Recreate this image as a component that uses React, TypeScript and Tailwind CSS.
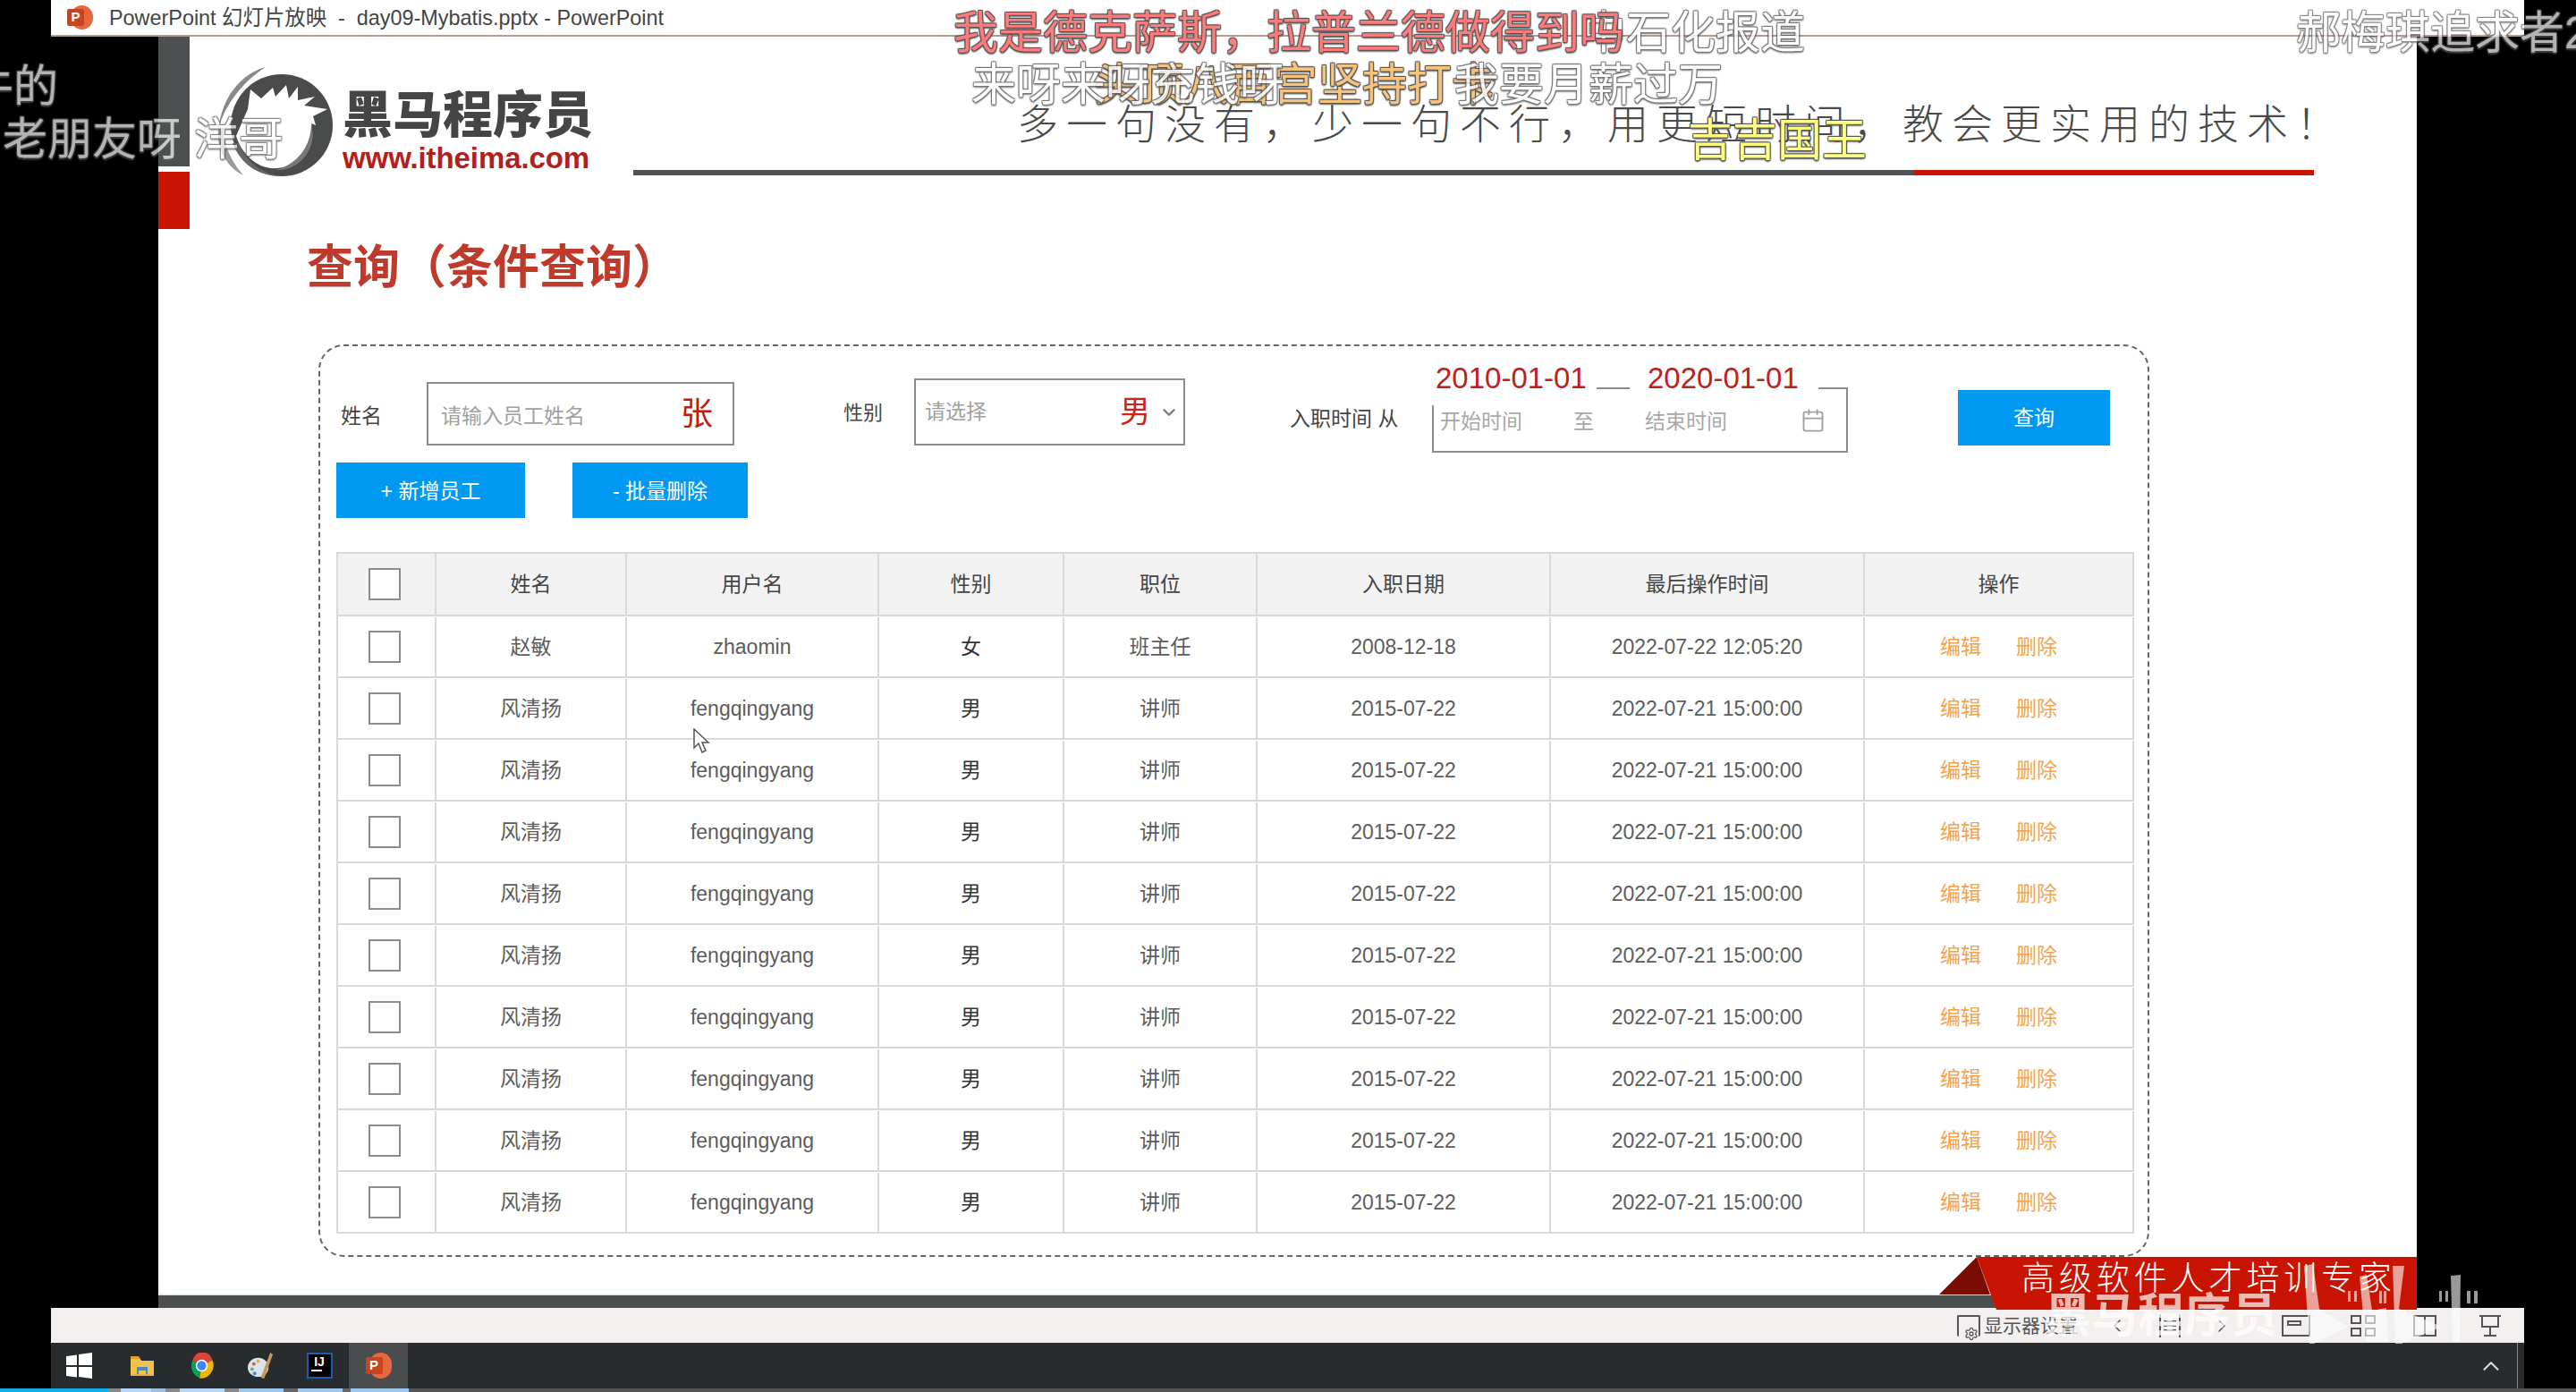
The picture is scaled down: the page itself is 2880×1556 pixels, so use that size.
import { Calendar, ChevronDown, ChevronLeft, ChevronRight, ChevronUp, Settings } from "lucide-react";

const COLS = "grid grid-cols-[110px_213px_282px_207px_216px_328px_351px_301px]";
const CELL = "flex items-center justify-center border-r-2 border-[#d9d9d9]";
const SHADOW =
  "[text-shadow:1px_1px_1px_#555,-1px_-1px_1px_#555,1px_-1px_1px_#555,-1px_1px_1px_#555,0_2px_2px_#666]";
const BARRAGE = `absolute whitespace-pre text-[50px] leading-none ${SHADOW}`;

const rows = [
  ["赵敏", "zhaomin", "女", "班主任", "2008-12-18", "2022-07-22 12:05:20"],
  ...Array.from({ length: 9 }, () => ["风清扬", "fengqingyang", "男", "讲师", "2015-07-22", "2022-07-21 15:00:00"]),
];

function Checkbox() {
  return <div className="mr-[5px] h-[36px] w-[36px] border-2 border-[#8c8c8c] bg-white" />;
}

function Logo() {
  return (
    <svg viewBox="0 0 170 150" className="h-[150px] w-[170px] shrink-0">
      <path d="M77 15C50 22 28 48 24 85C30 60 50 32 77 15Z" fill="#8a8a8a" />
      <path d="M24 85C22 110 36 128 52 136C40 122 30 105 30 82Z" fill="#9a9a9a" />
      <circle cx="95" cy="80" r="57" fill="#4a4c4c" />
      <path
        d="M44 92L57 62L60 40L72 50L85 38L88 48L100 35L103 50L113 37L113 52L132 48L120 58L146 62L130 70L133 80L128 78C132 100 118 126 90 128C68 130 50 112 44 92Z"
        fill="#fff"
      />
      <path d="M128 78C136 105 115 132 88 130C112 124 128 104 128 78Z" fill="#777" />
      <path d="M40 100C50 125 70 137 95 137C75 135 55 122 47 100Z" fill="#666" />
    </svg>
  );
}

function FolderIcon() {
  return (
    <svg viewBox="0 0 26 22" className="h-[22px] w-[26px]">
      <path d="M0 2h10l2 3h14v17H0Z" fill="#f2c14e" />
      <path d="M0 0h9l2 3H0Z" fill="#e0a030" />
      <path d="M7 12h12v8h-2v-4H9v4H7Z" fill="#3d8fc9" />
      <path d="M0 20h26v2H0Z" fill="#e8b33e" />
    </svg>
  );
}

function ChromeIcon() {
  return (
    <svg viewBox="0 0 48 48" className="h-[29px] w-[29px]">
      <path d="M24 24 7 14A20 24 0 0 1 44 14Z" fill="#db4437" />
      <path d="M24 24 7 14A22 24 0 0 0 20 47Z" fill="#0f9d58" />
      <path d="M24 24 44 14A22 24 0 0 1 20 47Z" fill="#f4b400" />
      <circle cx="24" cy="24" r="11" fill="#fff" />
      <circle cx="24" cy="24" r="8.5" fill="#4285f4" />
    </svg>
  );
}

function PaletteIcon() {
  return (
    <svg viewBox="0 0 30 32" className="h-[31px] w-[29px]">
      <ellipse cx="12" cy="18" rx="12" ry="11" fill="#dbe4ea" />
      <circle cx="7" cy="14" r="2" fill="#d9534f" />
      <circle cx="12" cy="11" r="2" fill="#f0ad4e" />
      <circle cx="5" cy="20" r="2" fill="#5cb85c" />
      <circle cx="8" cy="25" r="2" fill="#428bca" />
      <path d="M26 1 29 3 19 31 15 30Z" fill="#c99655" />
    </svg>
  );
}

function PptIcon({ small }: { small?: boolean }) {
  return (
    <div className={`relative flex shrink-0 items-center ${small ? "h-[27px] w-[29px]" : "h-[29px] w-[29px]"}`}>
      <div className="absolute right-0 h-full w-[25px] rounded-full bg-[#e8683c]" />
      <div className="absolute left-0 flex h-[19px] w-[19px] items-center justify-center rounded-[2px] bg-[#c8431f] text-[15px] font-bold text-white">
        P
      </div>
    </div>
  );
}

function Watermark() {
  return (
    <svg viewBox="0 0 240 110" className="absolute left-[2560px] top-[1400px] h-[110px] w-[240px] opacity-60">
      <g fill="#fff">
        <path d="M16 15 26 13 33 63 65 83 27 102 22 102Z" />
        <path d="M78 27 86 25 92 65 108 62 110 100 85 100Z" />
        <path d="M115 15 128 15 122 63 170 83 125 102 118 102Z" />
        <path d="M180 26 191 25 190 100 182 100Z" />
        <path d="M65 43h3v12h-3ZM72 43h3v12h-3ZM100 43h3v14h-3ZM105 43h3v14h-3ZM167 43h3v12h-3ZM174 43h3v12h-3ZM198 43h4v14h-4ZM206 43h4v14h-4Z" />
      </g>
    </svg>
  );
}

export default function App() {
  return (
    <div className="relative flex h-[1556px] w-[2880px] flex-col overflow-hidden bg-black font-['Liberation_Sans','Noto_Sans_CJK_SC',sans-serif]">
      {/* window title */}
      <div className="ml-[57px] flex h-[41px] w-[2765px] shrink-0 items-center gap-[18px] border-b-2 border-[#b8998f] bg-white pl-[18px] text-[23.4px] text-[#444]">
        <PptIcon small />
        <span className="whitespace-pre pt-[2px]">PowerPoint 幻灯片放映  -  day09-Mybatis.pptx - PowerPoint</span>
      </div>

      {/* slide */}
      <div className="relative ml-[177px] flex h-[1421px] w-[2525px] shrink-0 flex-col bg-white">
        <div className="flex h-[1406px]">
          <div className="flex w-[35px] shrink-0 flex-col gap-[6px]">
            <div className="h-[145px] bg-[#4c5050]" />
            <div className="h-[64px] bg-[#c81400]" />
          </div>

          <div className="flex flex-1 flex-col">
            <div className="flex h-[155px] shrink-0">
              <div className="ml-[8px] mt-[19px]">
                <Logo />
              </div>
              <div className="ml-[-7px] mt-[60px] flex h-[90px] w-[277px] flex-col">
                <div className="whitespace-nowrap text-[56px] font-black leading-[55px] text-[#454545]">黑马程序员</div>
                <div className="mt-[4px] text-[33px] font-bold leading-[34px] tracking-[-0.1px] text-[#b3201a]">
                  www.itheima.com
                </div>
              </div>
              <div className="ml-[48px] flex w-[1879px] flex-col justify-end">
                <div className="whitespace-nowrap pb-[25px] pl-[429px] text-[46px] font-light leading-[52px] tracking-[9px] text-[#4a4a4a]">
                  多一句没有，少一句不行，用更短时间，教会更实用的技术！
                </div>
                <div className="flex h-[6px]">
                  <div className="w-[1432px] bg-[#4f5353]" />
                  <div className="w-[447px] bg-[#c81400]" />
                </div>
              </div>
            </div>

            <h1 className="ml-[131px] mt-[77px] h-[52px] whitespace-nowrap text-[52px] font-bold leading-[52px] text-[#bf3a2b]">
              查询（条件查询）
            </h1>

            {/* search panel */}
            <div className="ml-[144px] mt-[60px] h-[1020px] w-[2047px] rounded-[28px] border-2 border-dashed border-[#666] px-[18px] pt-[36px]">
              <div className="flex h-[83px] items-start text-[23px] text-[#444]">
                <span className="ml-[5px] mt-[30px] w-[48px] leading-[24px]">姓名</span>
                <div className="relative ml-[48px] mt-[4px] flex h-[71px] w-[344px] items-center border-2 border-[#8c8c8c] pl-[14px] pt-[5px] text-[#a0a0a0]">
                  请输入员工姓名
                  <span className="absolute left-[282px] top-[14px] text-[36px] leading-[40px] text-[#c01a10]">张</span>
                </div>
                <span className="ml-[122px] mt-[27px] w-[44px] whitespace-nowrap text-[22px] leading-[24px]">性别</span>
                <div className="relative ml-[35px] flex h-[75px] w-[303px] items-center border-2 border-[#8c8c8c] pb-[1px] pl-[10px] text-[#a0a0a0]">
                  请选择
                  <span className="absolute left-[228px] top-[16px] text-[34px] leading-[38px] text-[#d0201a]">男</span>
                  <ChevronDown className="absolute left-[272px] top-[25px] h-[22px] w-[22px] text-[#777]" strokeWidth={2.5} />
                </div>
                <span className="ml-[117px] mt-[33px] w-[121px] whitespace-pre text-[23px] leading-[24px]">入职时间 从</span>
                <div className="relative ml-[38px] mt-[10px] flex h-[73px] w-[465px] shrink-0 items-start border-2 border-[#8c8c8c] pt-[24px] text-[#a8a8a8]">
                  <div className="absolute -left-[4px] -top-[30px] h-[48px] w-[186px] bg-white pl-[6px] text-[33px] leading-[36px] text-[#c0201a]">
                    2010-01-01
                  </div>
                  <div className="absolute left-[219px] -top-[30px] h-[32px] w-[211px] bg-white pl-[20px] text-[33px] leading-[36px] text-[#c0201a]">
                    2020-01-01
                  </div>
                  <span className="ml-[7px] w-[149px] leading-[24px]">开始时间</span>
                  <span className="w-[80px] leading-[24px]">至</span>
                  <span className="w-[174px] leading-[24px]">结束时间</span>
                  <Calendar className="h-[28px] w-[28px] -translate-y-[3px] text-[#a0a0a0]" strokeWidth={1.6} />
                </div>
                <button className="ml-[123px] mt-[13px] h-[62px] w-[170px] bg-[#0099f2] text-[23px] text-white">查询</button>
              </div>

              <div className="mt-[11px] flex gap-[53px] text-[23px] text-white">
                <button className="h-[62px] w-[211px] bg-[#0099f2] pt-[2px]">+ 新增员工</button>
                <button className="h-[62px] w-[196px] bg-[#0099f2] pt-[2px]">- 批量删除</button>
              </div>

              {/* table */}
              <div className="mt-[38px] w-[2010px] border-l-2 border-t-2 border-[#d9d9d9] text-[23px]">
                <div className={`${COLS} h-[70px] border-b-2 border-[#d9d9d9] bg-[#f2f2f2] text-[#444]`}>
                  <div className={CELL}>
                    <Checkbox />
                  </div>
                  {["姓名", "用户名", "性别", "职位", "入职日期", "最后操作时间", "操作"].map((h) => (
                    <div key={h} className={CELL}>
                      {h}
                    </div>
                  ))}
                </div>
                {rows.map((r, i) => (
                  <div key={i} className={`${COLS} h-[69px] border-b-2 border-[#d9d9d9] pt-[1px] text-[#5c5c5c]`}>
                    <div className={CELL}>
                      <Checkbox />
                    </div>
                    {r.map((c, j) => (
                      <div key={j} className={j === 2 ? `${CELL} text-[#333]` : CELL}>
                        {c}
                      </div>
                    ))}
                    <div className={`${CELL} gap-[39px] text-[#f4a24c]`}>
                      <span>编辑</span>
                      <span>删除</span>
                    </div>
                  </div>
                ))}
              </div>
            </div>
          </div>
        </div>
        <div className="h-[15px] border-t border-[#ddd] bg-[#4b4f50]" />

        {/* red corner ribbon */}
        <svg viewBox="0 0 57 42" className="absolute left-[1991px] top-[1364px] h-[42px] w-[57px]">
          <path d="M42 0 57 42H0Z" fill="#7a0c02" />
        </svg>
        <div className="absolute left-[2033px] top-[1364px] h-[59px] w-[492px] bg-[#c81400] pl-[50px] pt-[5px] text-[37px] font-light leading-[40px] tracking-[4.9px] text-white [clip-path:polygon(0_0,100%_0,100%_100%,22px_100%)]">
          高级软件人才培训专家
        </div>
      </div>

      {/* status bar */}
      <div className="ml-[57px] flex h-[39px] w-[2765px] shrink-0 items-center bg-[#f2efee] pl-[2131px] text-[21px] text-[#555]">
        <div className="relative h-[24px] w-[26px] shrink-0 rounded-[2px] border-2 border-b-0 border-[#555]">
          <Settings className="absolute -bottom-[5px] left-[6px] h-[16px] w-[16px] bg-[#f2efee]" strokeWidth={2} />
        </div>
        <span className="ml-[4px] w-[107px] whitespace-nowrap">显示器设置</span>
        <ChevronLeft className="ml-[30px] h-[24px] w-[24px] shrink-0" strokeWidth={1.5} />
        <div className="ml-[35px] flex h-[26px] w-[24px] shrink-0 flex-col justify-center gap-[3px] border-x-2 border-[#555] px-[3px]">
          <div className="h-[2px] bg-[#555]" />
          <div className="h-[2px] bg-[#555]" />
          <div className="h-[2px] bg-[#555]" />
        </div>
        <ChevronRight className="ml-[34px] h-[24px] w-[24px] shrink-0" strokeWidth={1.5} />
        <div className="ml-[55px] h-[24px] w-[32px] shrink-0 border-2 border-[#555] p-[4px]">
          <div className="h-[6px] w-[16px] border-2 border-[#555]" />
        </div>
        <div className="ml-[45px] grid h-[24px] w-[28px] shrink-0 grid-cols-2 gap-[4px]">
          <div className="border-2 border-[#555]" />
          <div className="border-2 border-[#555]" />
          <div className="border-2 border-[#555]" />
          <div className="border-2 border-[#555]" />
        </div>
        <div className="ml-[42px] flex h-[24px] w-[26px] shrink-0 justify-center border-2 border-[#555]">
          <div className="h-full w-[2px] bg-[#555]" />
        </div>
        <svg viewBox="0 0 26 26" className="ml-[47px] h-[26px] w-[26px] shrink-0" fill="none" stroke="#555" strokeWidth="2">
          <path d="M1 2h24M4 2v12h18V2M13 14v9M6 24h14" />
        </svg>
      </div>

      {/* task bar */}
      <div className="ml-[57px] flex h-[51px] w-[2765px] shrink-0 items-center bg-[#292c2e] text-white">
        <div className="mr-[6px] flex w-[63px] justify-center">
          <svg viewBox="0 0 29 29" className="h-[29px] w-[29px]" fill="#fff">
            <path d="M0 4 12 2.4V14H0ZM14 2.1 29 0V14H14ZM0 16H12V27.6L0 26ZM14 16H29V29L14 26.9Z" />
          </svg>
        </div>
        <div className="flex w-[66px] justify-center">
          <FolderIcon />
        </div>
        <div className="flex w-[66px] justify-center">
          <ChromeIcon />
        </div>
        <div className="flex w-[66px] justify-center">
          <PaletteIcon />
        </div>
        <div className="flex w-[66px] justify-center">
          <div className="flex h-[29px] w-[29px] flex-col items-center border-2 border-[#1d5fa8] bg-black text-[14px] font-bold leading-[17px]">
            IJ
            <div className="ml-[3px] h-[2px] w-[12px] self-start bg-white" />
          </div>
        </div>
        <div className="flex h-full w-[66px] items-center justify-center bg-[#4a4c4e]">
          <PptIcon />
        </div>
        <div className="ml-auto mr-[7px] flex h-full items-center border-r border-[#888] pr-[14px]">
          <ChevronUp className="h-[30px] w-[30px] text-[#ddd]" strokeWidth={1.6} />
        </div>
      </div>

      {/* video progress */}
      <div className="flex h-[4px] w-full shrink-0 bg-[#555]">
        <div className="w-[121px] bg-[#10aee8]" />
        <div className="w-[14px] bg-[#888]" />
        <div className="w-[34px] bg-[#b5d6f4]" />
        <div className="w-[16px] bg-[#9dbfdc]" />
        <div className="w-[16px] bg-[#888]" />
        <div className="w-[50px] bg-[#b5d6f4]" />
        <div className="w-[16px] bg-[#888]" />
        <div className="w-[50px] bg-[#9cc8f0]" />
        <div className="w-[16px] bg-[#666]" />
        <div className="w-[50px] bg-[#9cc8f0]" />
        <div className="w-[9px] bg-[#666]" />
        <div className="w-[65px] bg-[#9cc8f0]" />
      </div>

      {/* mouse pointer */}
      <svg viewBox="0 0 20 28" className="absolute left-[775px] top-[814px] h-[28px] w-[20px]">
        <path d="M1 1V22L6 17L10 27L14 25L10 16H17Z" fill="#fff" stroke="#555" strokeWidth="1.5" />
      </svg>

      {/* barrage comments over the video */}
      <span className={`${BARRAGE} -left-[35px] top-[72px] text-white opacity-70`}>牛的</span>
      <span className={`${BARRAGE} left-[3px] top-[131px] text-white opacity-70`}>老朋友呀 洋哥</span>
      <span className={`${BARRAGE} left-[1768px] top-[12px] text-white opacity-80`}>中石化报道</span>
      <span className={`${BARRAGE} left-[1066px] top-[12px] text-[#ff7b7b]`}>我是德克萨斯，拉普兰德做得到吗</span>
      <span className={`${BARRAGE} left-[1223px] top-[70px] text-[#f7c27a]`}>头顶八百宫坚持打卡</span>
      <span className={`${BARRAGE} left-[1086px] top-[70px] text-white opacity-80`}>来呀来呀充钱呀</span>
      <span className={`${BARRAGE} left-[1626px] top-[70px] text-white opacity-80`}>我要月薪过万</span>
      <span className={`${BARRAGE} left-[1887px] top-[132px] text-[#ffff80]`}>吉吉国王</span>
      <span className={`${BARRAGE} left-[2567px] top-[12px] text-white opacity-70`}>郝梅琪追求者2</span>

      {/* logo watermark */}
      <span className="absolute left-[2286px] top-[1445px] whitespace-nowrap text-[52px] font-bold leading-none text-white opacity-70">
        黑马程序员
      </span>
      <Watermark />
    </div>
  );
}
